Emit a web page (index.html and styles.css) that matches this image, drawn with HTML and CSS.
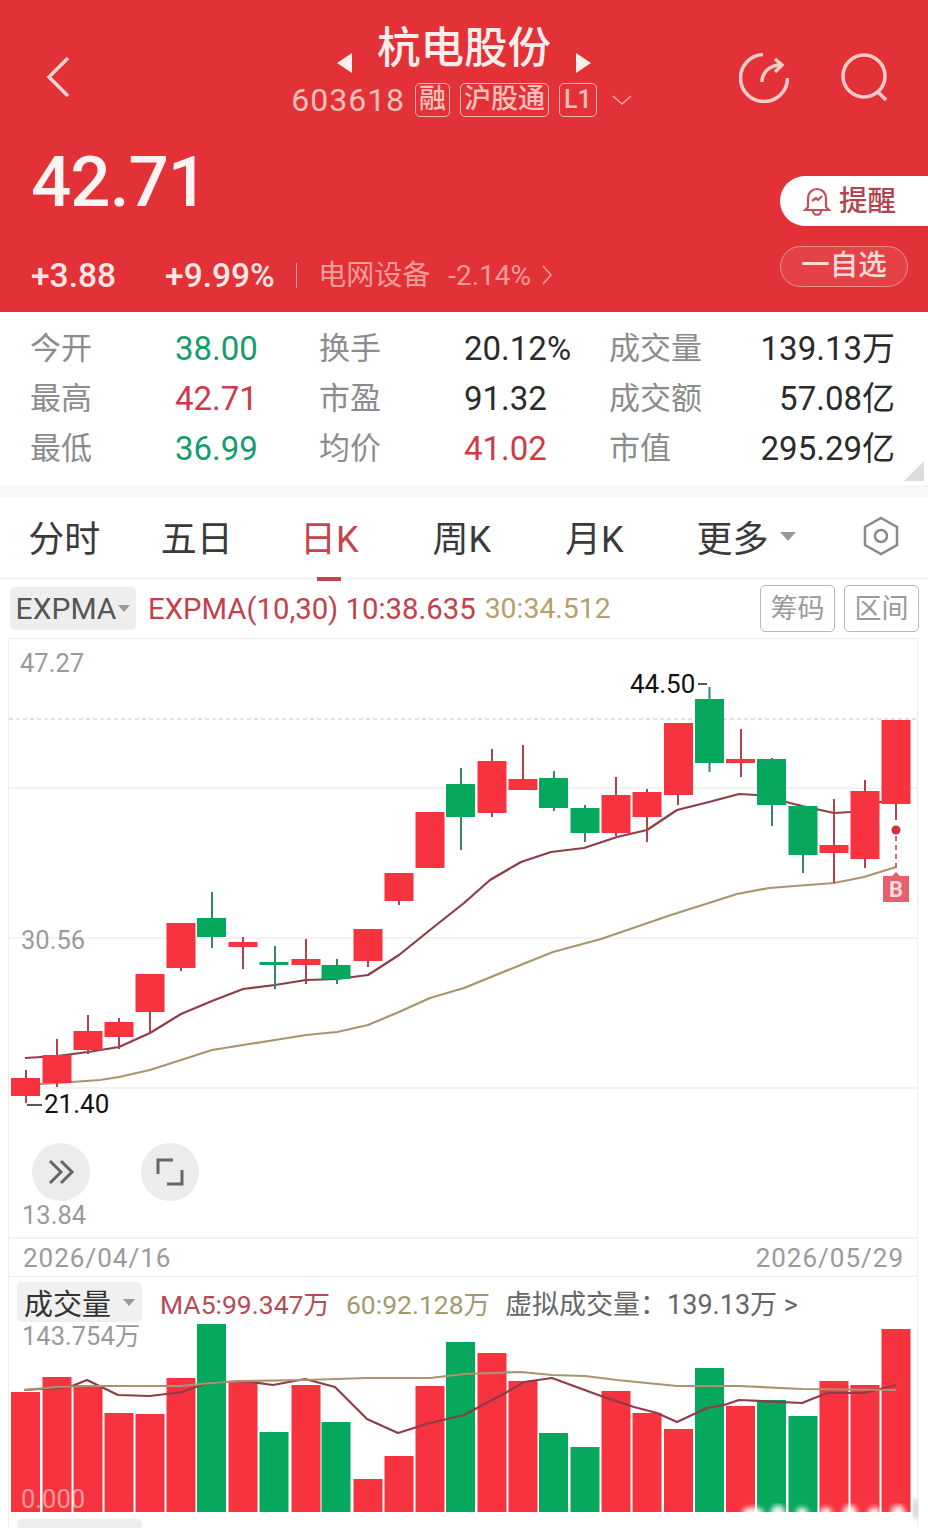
FILE: index.html
```html
<!DOCTYPE html>
<html>

<head>
    <meta charset="UTF-8">
    <meta name="viewport" content="width=device-width, initial-scale=1.0">
    <link rel="stylesheet" href="styles.css">
    <title>杭电股份</title>
</head>

<body>
    <header class="header">
        <div class="topbar">
            <div class="topbar-left">
                <svg class="icon-back" viewBox="0 0 30 44"><path d="M24 3 5 22l19 19" /></svg>
            </div>
            <div class="title-block">
                <div class="title-row">
                    <span class="tri tri-left"></span>
                    <span class="title">杭电股份</span>
                    <span class="tri tri-right"></span>
                </div>
                <div class="sub-row">
                    <span class="code">603618</span>
                    <span class="tag">融</span>
                    <span class="tag">沪股通</span>
                    <span class="tag tag-num">L1</span>
                    <svg class="icon-down" viewBox="0 0 20 10"><path d="M1 1l9 8 9-8" /></svg>
                </div>
            </div>
            <div class="topbar-right">
                <svg class="icon-round" viewBox="0 0 50 50">
                    <path d="M24 1.500A23.500 23.500 0 1 0 48.500 25" />
                    <path d="M23 29c0-10 8-17 19-17" />
                    <path d="M36 6l7 6-7 7" />
                </svg>
                <svg class="icon-round" viewBox="0 0 50 50">
                    <circle cx="25" cy="23" r="21" />
                    <path d="M38 38l9 9" />
                </svg>
            </div>
        </div>
        <div class="quote">
            <div class="quote-main">
                <div class="price">42.71</div>
                <div class="change-row">
                    <span class="change">+3.88</span>
                    <span class="change change-pct">+9.99%</span>
                    <span class="divider"></span>
                    <span class="sector">电网设备</span>
                    <span class="sector-pct">-2.14%</span>
                    <svg class="icon-more" viewBox="0 0 10 20"><path d="M1 1l8 9-8 9" /></svg>
                </div>
            </div>
            <div class="quote-actions">
                <div class="btn-remind">
                    <svg class="icon-bell" viewBox="0 0 28 30">
                        <path d="M5 21V12a9 9 0 0 1 18 0v9l3 3H2z" />
                        <path d="M10 25c0 5 8 5 8 0" />
                        <path d="M9 15l4-3 2 2 4-4" />
                    </svg>
                    <span class="remind-text">提醒</span>
                </div>
                <div class="btn-watch">一自选</div>
            </div>
        </div>
    </header>

    <section class="stats">
        <span class="stat-label">今开</span><span class="stat-num green">38.00</span>
        <span class="stat-label">换手</span><span class="stat-num">20.12%</span>
        <span class="stat-label">成交量</span><span class="stat-num right">139.13万</span>
        <span class="stat-label">最高</span><span class="stat-num red">42.71</span>
        <span class="stat-label">市盈</span><span class="stat-num">91.32</span>
        <span class="stat-label">成交额</span><span class="stat-num right">57.08亿</span>
        <span class="stat-label">最低</span><span class="stat-num green">36.99</span>
        <span class="stat-label">均价</span><span class="stat-num red">41.02</span>
        <span class="stat-label">市值</span><span class="stat-num right">295.29亿</span>
        <span class="corner"></span>
    </section>

    <div class="band"></div>

    <nav class="tabs">
        <span class="tab">分时</span>
        <span class="tab">五日</span>
        <span class="tab active">日K</span>
        <span class="tab">周K</span>
        <span class="tab">月K</span>
        <span class="tab-more">更多<i class="caret caret-big"></i></span>
        <svg class="icon-hex" viewBox="0 0 36 40">
            <path d="M18 2l16 9v18l-16 9-16-9V11z" />
            <circle cx="18" cy="20" r="6" />
        </svg>
    </nav>

    <div class="indicator">
        <span class="select">EXPMA<i class="caret"></i></span>
        <span class="legend-ten">EXPMA(10,30) 10:38.635</span>
        <span class="legend-thirty">30:34.512</span>
        <span class="tool tool-first">筹码</span>
        <span class="tool">区间</span>
    </div>

    <section class="chart-frame">
        <svg class="chart-main" width="908" height="600" viewBox="9 639 908 600">
            <path class="grid" d="M9 788h908M9 938h908M9 1088h908M9 1238h908" />
            <path class="grid-dash" d="M9 719h908" />

            <path class="line-ten" d="M25 1058 57 1056 88 1052 119 1047 150 1033 181 1014 212 1001 243 989 275 985 306 980 337 979 368 975 399 955 430 930 464 903 490 880 521 862 551 852 584 848 617 837 647 830 677 810 709 802 739 794 757 795 786 802 802 806 834 813 851 812 880 802 896 802" />
            <path class="line-thirty" d="M26 1085 57 1083 100 1080 119 1077 150 1070 181 1060 212 1050 243 1045 275 1040 306 1035 337 1032 368 1025 399 1012 430 998 464 988 523 964 553 952 601 939 671 915 737 894 769 888 834 883 864 877 896 867" />

            <path class="wick-up" d="M26 1070v33M57 1039v48M88 1015v39M119 1018v31M150 974v59M181 923v48M243 937v32M306 939v45M368 929v38M399 873v32M430 812v56M492 749v68M523 745v45M616 777v59M647 789v53M678 723v82M741 729v48M834 799v84M865 780v88M896 720v100" />
            <path class="wick-down" d="M212 892v56M275 946v43M337 959v25M461 768v82M554 771v40M585 805v37M709.500 687v85M772 758v68M803 806v67" />

            <g class="body-up">
                <rect x="11" y="1078" width="29" height="18" />
                <rect x="42.500" y="1055" width="29" height="28" />
                <rect x="73.500" y="1031" width="29" height="19" />
                <rect x="104.500" y="1022" width="29" height="15" />
                <rect x="135.500" y="974" width="29" height="38" />
                <rect x="166.500" y="923" width="29" height="45" />
                <rect x="228.500" y="942" width="29" height="5" />
                <rect x="291.500" y="959" width="29" height="6" />
                <rect x="353.500" y="929" width="29" height="32" />
                <rect x="384.500" y="873" width="29" height="28" />
                <rect x="415.500" y="812" width="29" height="56" />
                <rect x="477.500" y="761" width="29" height="52" />
                <rect x="508.500" y="779" width="29" height="11" />
                <rect x="601.500" y="795" width="29" height="38" />
                <rect x="632.500" y="792" width="29" height="25" />
                <rect x="664" y="723" width="29" height="72" />
                <rect x="726" y="759" width="29" height="4" />
                <rect x="819.500" y="845" width="29" height="8" />
                <rect x="850.500" y="791" width="29" height="68" />
                <rect x="881.500" y="720" width="29" height="84" />
            </g>
            <g class="body-down">
                <rect x="197" y="918" width="29" height="19" />
                <rect x="259.500" y="962" width="29" height="3" />
                <rect x="321.500" y="965" width="29" height="14" />
                <rect x="446" y="784" width="29" height="33" />
                <rect x="539" y="778" width="29" height="30" />
                <rect x="570.500" y="808" width="29" height="25" />
                <rect x="695" y="699" width="29" height="64" />
                <rect x="757" y="759" width="29" height="46" />
                <rect x="788.500" y="806" width="29" height="49" />
            </g>

            <text class="axis" x="20" y="672">47.27</text>
            <text class="axis" x="21" y="949">30.56</text>
            <text class="axis" x="22" y="1224">13.84</text>
            <text class="extreme" x="630" y="693">44.50</text>
            <path class="extreme-tick" d="M698 684h9M27 1105h15" />
            <text class="extreme" x="44" y="1113">21.40</text>

            <path class="signal-dash" d="M896 836v32" />
            <circle class="signal-dot" cx="896" cy="830" r="4.500" />
            <path class="signal-box" d="M883 876h9l4-4 4 4h9v26h-26z" />
            <text class="signal-text" x="896" y="897">B</text>

            <circle class="round-btn" cx="61" cy="1172" r="29" />
            <path class="round-icon" d="M50 1161l11 11-11 11M61 1161l11 11-11 11" />
            <circle class="round-btn" cx="170" cy="1172" r="29" />
            <path class="round-icon" d="M158 1174v-14h15M182 1170v14h-15" />
        </svg>

        <div class="dates">
            <span>2026/04/16</span>
            <span>2026/05/29</span>
        </div>

        <div class="volume-head">
            <span class="select select-volume">成交量<i class="caret"></i></span>
            <span class="ma-five">MA5:99.347万</span>
            <span class="ma-sixty">60:92.128万</span>
            <span class="ma-virtual">虚拟成交量：139.13万 &gt;</span>
        </div>

        <svg class="chart-volume" width="908" height="204" viewBox="9 1324 908 204">
            <defs>
                <filter id="soft"><feGaussianBlur stdDeviation="2.500" /></filter>
            </defs>
            <g class="body-up">
                <rect x="11" y="1392" width="29" height="120" />
                <rect x="42.500" y="1377" width="29" height="135" />
                <rect x="73.500" y="1385" width="29" height="127" />
                <rect x="104.500" y="1413" width="29" height="99" />
                <rect x="135.500" y="1414" width="29" height="98" />
                <rect x="166.500" y="1378" width="29" height="134" />
                <rect x="228.500" y="1381" width="29" height="131" />
                <rect x="291.500" y="1385" width="29" height="127" />
                <rect x="353.500" y="1479" width="29" height="33" />
                <rect x="384.500" y="1456" width="29" height="56" />
                <rect x="415.500" y="1386" width="29" height="126" />
                <rect x="477.500" y="1353" width="29" height="159" />
                <rect x="508.500" y="1381" width="29" height="131" />
                <rect x="601.500" y="1391" width="29" height="121" />
                <rect x="632.500" y="1413" width="29" height="99" />
                <rect x="664" y="1429" width="29" height="83" />
                <rect x="726" y="1406" width="29" height="106" />
                <rect x="819.500" y="1381" width="29" height="131" />
                <rect x="850.500" y="1385" width="29" height="127" />
                <rect x="881.500" y="1329" width="29" height="183" />
            </g>
            <g class="body-down">
                <rect x="197" y="1324" width="29" height="188" />
                <rect x="259.500" y="1432" width="29" height="80" />
                <rect x="321.500" y="1422" width="29" height="90" />
                <rect x="446" y="1342" width="29" height="170" />
                <rect x="539" y="1433" width="29" height="79" />
                <rect x="570.500" y="1447" width="29" height="65" />
                <rect x="695" y="1368" width="29" height="144" />
                <rect x="757" y="1400" width="29" height="112" />
                <rect x="788.500" y="1416" width="29" height="96" />
            </g>
            <path class="line-ten" d="M24 1390 57 1388 72 1386 87 1380 118 1395 150 1396 182 1392 207 1383 243 1381 273 1385 305 1379 335 1387 367 1419 398 1433 430 1423 464 1415 507 1392 524 1382 552 1378 601 1396 634 1407 657 1413 677 1422 707 1408 724 1405 739 1400 802 1403 827 1393 864 1393 896 1385" />
            <path class="line-thirty" d="M24 1390 57 1387 88 1386 181 1386 211 1383 243 1381 305 1380 367 1378 430 1378 464 1374 521 1372 552 1375 585 1376 617 1380 677 1386 739 1386 802 1389 896 1390" />
            <text class="axis" x="22" y="1345">143.754万</text>
            <text class="axis axis-zero" x="21" y="1508">0.000</text>
            <g class="watermark" filter="url(#soft)">
                <ellipse cx="753" cy="1513" rx="11" ry="6" />
                <circle cx="778" cy="1512" r="7" />
                <circle cx="802" cy="1513" r="6" />
                <circle cx="826" cy="1513" r="6" />
                <circle cx="850" cy="1512" r="7" />
                <circle cx="874" cy="1513" r="6" />
                <circle cx="898" cy="1512" r="7" />
            </g>
            <path class="watermark-mark" d="M913 1499h5v20h-5z" filter="url(#soft)" />
        </svg>
    </section>

    <div class="next-select"></div>
</body>

</html>
```

FILE: styles.css
```css
body {
    font-family: Roboto, 'Noto Sans CJK SC', sans-serif;
    background-color: #ffffff;
    margin: 0;
    padding: 0;
    width: 928px;
    height: 1528px;
    overflow: hidden;
    position: relative;
}

/* 头部 */
.header {
    height: 312px;
    background-color: #e23238;
    color: #fde9e7;
}

.topbar {
    height: 142px;
    display: grid;
    grid-template-columns: 1fr auto 1fr;
}

.topbar-left {
    padding: 55px 0 0 44px;
}

.topbar-right {
    display: flex;
    justify-content: flex-end;
    gap: 50px;
    padding: 53px 39px 0 0;
}

.icon-back {
    width: 30px;
    height: 44px;
    fill: none;
    stroke: #f9d3d1;
    stroke-width: 3.5;
}

.icon-round {
    width: 50px;
    height: 50px;
    fill: none;
    stroke: #f7cbc8;
    stroke-width: 3.5;
}

.title-block {
    padding-top: 24px;
}

.title-row {
    display: flex;
    justify-content: center;
    align-items: center;
    gap: 25px;
    height: 50px;
}

.title {
    font-size: 43.500px;
    line-height: 50px;
    font-weight: 500;
    color: #fdeeec;
}

.tri {
    width: 0;
    height: 0;
    margin-top: 28px;
    border-top: 10px solid transparent;
    border-bottom: 10px solid transparent;
}

.tri-left {
    border-right: 15px solid #fdeeec;
}

.tri-right {
    border-left: 15px solid #fdeeec;
}

.sub-row {
    display: flex;
    align-items: center;
    gap: 10px;
    height: 34px;
    margin-top: 9px;
    padding-right: 5px;
    color: #f7c0bb;
}

.code {
    font-size: 32px;
    letter-spacing: 1px;
}

.tag {
    height: 34px;
    box-sizing: border-box;
    padding: 0 3px;
    border: 1.500px solid #f4b5b0;
    border-radius: 5px;
    font-size: 27px;
    font-weight: 500;
    line-height: 31px;
}

.tag-num {
    padding: 0 4px;
    font-size: 25px;
}

.icon-down {
    width: 20px;
    height: 10px;
    margin-left: 5px;
    fill: none;
    stroke: #f0a9a4;
    stroke-width: 1.500;
}

.quote {
    display: flex;
    justify-content: space-between;
}

.quote-main {
    padding-left: 31px;
}

.price {
    font-size: 71px;
    line-height: 80px;
    font-weight: 500;
    letter-spacing: -1px;
    color: #fdf3f2;
}

.change-row {
    display: flex;
    align-items: center;
    height: 40px;
    margin-top: 33px;
}

.change {
    font-size: 33.500px;
    font-weight: 500;
    color: #fde6e4;
}

.change-pct {
    margin-left: 49px;
}

.divider {
    width: 1.500px;
    height: 25px;
    margin: 0 21px;
    background-color: #ef9c98;
}

.sector {
    margin-top: -4px;
    font-size: 28px;
    color: #f29c98;
}

.sector-pct {
    margin-left: 18px;
    font-size: 28px;
    color: #f29c98;
}

.icon-more {
    width: 10px;
    height: 20px;
    margin-left: 11px;
    fill: none;
    stroke: #f29c98;
    stroke-width: 1.500;
}

.quote-actions {
    width: 148px;
    padding-top: 34px;
}

.btn-remind {
    display: flex;
    align-items: center;
    gap: 8px;
    height: 50px;
    padding-left: 23px;
    box-sizing: border-box;
    border-radius: 25px 0 0 25px;
    background-color: #ffffff;
    color: #b04550;
    font-size: 28.500px;
    font-weight: 500;
}

.remind-text {
    margin-top: -5px;
}

.icon-bell {
    width: 28px;
    height: 30px;
    fill: none;
    stroke: #c2505a;
    stroke-width: 2.200;
}

.btn-watch {
    width: 128px;
    height: 41px;
    margin-top: 20px;
    box-sizing: border-box;
    border: 1.500px solid #ee8f8b;
    border-radius: 21px;
    background-color: rgba(255, 255, 255, 0.08);
    color: #fbdcd9;
    font-size: 28.500px;
    font-weight: 500;
    line-height: 38px;
    text-align: center;
}

/* 行情数据 */
.stats {
    position: relative;
    height: 173px;
    box-sizing: border-box;
    padding: 11px 33px 0 30px;
    display: grid;
    grid-template-columns: 145px 144px 145px 145px 95px 191px;
    grid-auto-rows: 50px;
    align-items: center;
}

.stat-label {
    margin-top: -5px;
    font-size: 31px;
    color: #8c8c8c;
}

.stat-num {
    font-size: 33px;
    color: #2b2b2b;
}

.stat-num.green {
    color: #169c6c;
}

.stat-num.red {
    color: #cf3a46;
}

.stat-num.right {
    margin-top: -4px;
    text-align: right;
}

.corner {
    position: absolute;
    right: 4px;
    top: 149px;
    width: 20px;
    height: 20px;
    background-color: #dcdcdc;
    clip-path: polygon(100% 0, 100% 100%, 0 100%);
}

.band {
    height: 12px;
    background-color: #f7f7f7;
}

/* 周期切换 */
.tabs {
    display: flex;
    align-items: center;
    height: 82px;
    box-sizing: border-box;
    padding-bottom: 3px;
    border-bottom: 1px solid #ececec;
}

.tab {
    position: relative;
    width: 132.500px;
    text-align: center;
    font-size: 36px;
    color: #3a3a3a;
}

.tab:first-child {
    margin-left: -2px;
}

.tab.active {
    color: #c8424e;
}

.tab.active::after {
    content: '';
    position: absolute;
    left: 54px;
    bottom: -19px;
    width: 24px;
    height: 4px;
    background-color: #c8424e;
}

.tab-more {
    display: flex;
    align-items: center;
    margin-left: 36px;
    font-size: 36px;
    color: #3a3a3a;
}

.caret {
    display: inline-block;
    width: 0;
    height: 0;
    margin-left: 2px;
    border-left: 6px solid transparent;
    border-right: 6px solid transparent;
    border-top: 7px solid #999999;
}

.caret-big {
    margin-left: 11px;
    border-left-width: 8px;
    border-right-width: 8px;
    border-top-width: 9px;
}

.icon-hex {
    width: 36px;
    height: 40px;
    margin-left: auto;
    margin-right: 29px;
    fill: none;
    stroke: #8a8a8a;
    stroke-width: 2.500;
}

/* 指标 */
.indicator {
    display: flex;
    align-items: center;
    height: 59px;
    padding-left: 10px;
    font-size: 29.300px;
}

.select {
    display: flex;
    align-items: center;
    justify-content: center;
    width: 126px;
    height: 43px;
    border-radius: 5px;
    background-color: #eeeeee;
    color: #555555;
    font-size: 30px;
}

.legend-ten {
    margin-left: 12px;
    color: #c2414c;
}

.legend-thirty {
    margin-left: 9px;
    color: #b5a168;
    font-size: 28.400px;
}

.tool {
    display: block;
    width: 75px;
    height: 47px;
    box-sizing: border-box;
    border: 1.500px solid #b8b8b8;
    border-radius: 5px;
    color: #9a9a9a;
    font-size: 27px;
    line-height: 46px;
    text-align: center;
}

.tool-first {
    margin-left: auto;
}

.tool + .tool {
    margin-left: 9px;
    margin-right: 9px;
}

/* K线图 */
.chart-frame {
    width: 910px;
    margin-left: 8px;
    box-sizing: border-box;
    border: 1px solid #eeeeee;
    border-bottom: none;
    height: 890px;
}

.chart-main,
.chart-volume {
    display: block;
    overflow: visible;
}

.grid {
    fill: none;
    stroke: #eeeeee;
    stroke-width: 1.500;
}

.grid-dash {
    fill: none;
    stroke: #c4c4c4;
    stroke-width: 1;
    stroke-dasharray: 4 3;
}

.line-ten {
    fill: none;
    stroke: #8e3c46;
    stroke-width: 2.200;
    stroke-linejoin: round;
}

.line-thirty {
    fill: none;
    stroke: #a8956f;
    stroke-width: 2.200;
    stroke-linejoin: round;
}

.wick-up {
    fill: none;
    stroke: #b8404c;
    stroke-width: 2;
}

.wick-down {
    fill: none;
    stroke: #2f8a66;
    stroke-width: 2;
}

.body-up {
    fill: #f6333f;
}

.body-down {
    fill: #05a85c;
}

.axis {
    fill: #9a9a9a;
    font-size: 25.500px;
}

.axis-zero {
    fill: rgba(255, 255, 255, 0.5);
}

.extreme {
    fill: #111111;
    font-size: 26px;
}

.extreme-tick {
    fill: none;
    stroke: #222222;
    stroke-width: 1.500;
}

.signal-dash {
    fill: none;
    stroke: #c43c4a;
    stroke-width: 1.500;
    stroke-dasharray: 5 4;
}

.signal-dot {
    fill: #cf3040;
}

.signal-box {
    fill: #e5606c;
}

.signal-text {
    fill: #f5d8da;
    font-size: 22px;
    font-weight: 700;
    text-anchor: middle;
}

.round-btn {
    fill: #ececec;
}

.round-icon {
    fill: none;
    stroke: #666666;
    stroke-width: 3;
}

.dates {
    display: flex;
    justify-content: space-between;
    height: 38px;
    box-sizing: border-box;
    padding: 0 13px 0 14px;
    border-bottom: 1.500px solid #eeeeee;
    color: #9a9a9a;
    font-size: 26px;
    line-height: 38px;
    letter-spacing: 1px;
}

.volume-head {
    display: flex;
    align-items: center;
    height: 47px;
    padding: 3px 0 0 8px;
    box-sizing: border-box;
    font-size: 26.500px;
}

.select-volume {
    width: 125px;
    height: 40px;
    background-color: #f0f0f0;
    color: #333333;
    font-size: 29px;
}

.select-volume .caret {
    margin-left: 12px;
}

.ma-five {
    margin-left: 18px;
    color: #b84a56;
}

.ma-sixty {
    margin-left: 16px;
    color: #a39a6c;
}

.ma-virtual {
    margin-left: 15px;
    color: #666666;
    font-size: 27px;
}

.watermark {
    fill: #ffffff;
    opacity: 0.9;
}

.watermark-mark {
    fill: #cfcfcf;
}

.next-select {
    position: absolute;
    left: 17px;
    top: 1519px;
    width: 125px;
    height: 20px;
    border-radius: 5px;
    background-color: #eeeeee;
}
```
